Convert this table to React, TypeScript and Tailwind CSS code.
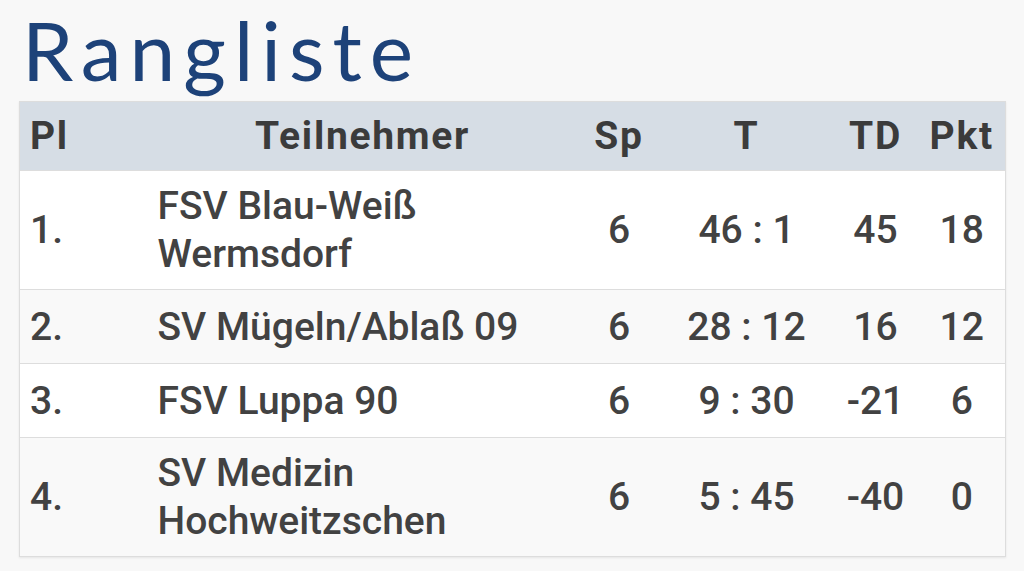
import React from "react";

const rows = [
  { pl: "1.", name: ["FSV Blau-Weiß", "Wermsdorf"], sp: "6", t: "46 : 1", td: "45", pkt: "18" },
  { pl: "2.", name: ["SV Mügeln/Ablaß 09"], sp: "6", t: "28 : 12", td: "16", pkt: "12" },
  { pl: "3.", name: ["FSV Luppa 90"], sp: "6", t: "9 : 30", td: "-21", pkt: "6" },
  { pl: "4.", name: ["SV Medizin", "Hochweitzschen"], sp: "6", t: "5 : 45", td: "-40", pkt: "0" },
];

export default function App() {
  return (
    <div className="w-[1024px] h-[571px] bg-[#f8f8f8] overflow-hidden px-[19px]">
      <h1 className="ml-[3px] text-[82px] leading-[98px] pb-[3px] font-normal text-[#1d4279] tracking-[8px] [font-family:Lato,sans-serif]">
        Rangliste
      </h1>
      <table className="w-[986px] table-fixed border-collapse border border-[#dddddd] text-[#424242] [font-family:Roboto,sans-serif] shadow-[0_1px_2px_rgba(0,0,0,0.08)]">
        <colgroup>
          <col className="w-[128px]" />
          <col className="w-[430px]" />
          <col className="w-[83px]" />
          <col className="w-[172px]" />
          <col className="w-[86px]" />
          <col className="w-[87px]" />
        </colgroup>
        <thead>
          <tr className="bg-[#d6dde5] h-[69px] text-[39px] font-bold leading-[45px] tracking-[1.7px] text-[#3b3b3b]">
            <th className="text-left px-[10px]">Pl</th>
            <th className="text-center px-[10px]">Teilnehmer</th>
            <th className="text-center">Sp</th>
            <th className="text-center">T</th>
            <th className="text-center">TD</th>
            <th className="text-center">Pkt</th>
          </tr>
        </thead>
        <tbody className="text-[39px] font-medium leading-[48px]">
          {rows.map((r, i) => (
            <tr
              key={i}
              className={`border-t border-[#dddddd] ${r.name.length > 1 ? "h-[119px]" : "h-[74px]"} ${i % 2 === 0 ? "bg-white" : "bg-[#f9f9f9]"}`}
            >
              <td className="px-[10px]">{r.pl}</td>
              <td className="px-[10px]">
                {r.name.map((n, j) => (
                  <div key={j}>{n}</div>
                ))}
              </td>
              <td className="text-center">{r.sp}</td>
              <td className="text-center whitespace-nowrap">{r.t}</td>
              <td className="text-center">{r.td}</td>
              <td className="text-center">{r.pkt}</td>
            </tr>
          ))}
        </tbody>
      </table>
    </div>
  );
}
